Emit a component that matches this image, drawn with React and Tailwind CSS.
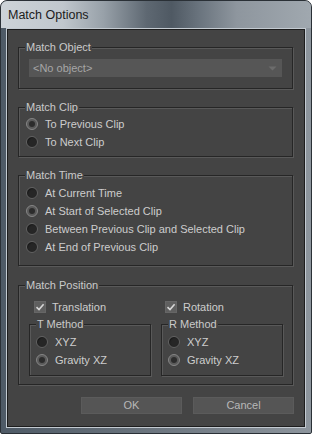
import React from 'react'

const font = { fontFamily: '"Liberation Sans", Arial, sans-serif' }

function Group({ title, className = '', children }) {
  return (
    <div
      className={`relative border border-[#262626] shadow-[1px_1px_0_#595959,inset_1px_1px_0_#595959] ${className}`}
    >
      <span className="absolute left-[6px] top-[-8px] bg-[#444444] px-[1px] text-[11px] leading-[14px] text-[#cacaca]">
        {title}
      </span>
      {children}
    </div>
  )
}

function Radio({ label, checked, className = '' }) {
  return (
    <div className={`flex items-center h-[18px] gap-[7px] ${className}`}>
      {checked ? (
        <div className="w-[12px] h-[12px] rounded-full border border-[#858585] bg-[#5a5a5a] flex items-center justify-center shrink-0">
          <div className="w-[6px] h-[6px] rounded-full bg-[#2c2c2c]" />
        </div>
      ) : (
        <div className="w-[12px] h-[12px] rounded-full border border-[#626262] bg-[#262626] shadow-[inset_1px_1px_1px_#1a1a1a] shrink-0" />
      )}
      <span className="text-[11px] leading-[14px] text-[#cdcdcd] whitespace-nowrap">{label}</span>
    </div>
  )
}

function Check({ label, className = '' }) {
  return (
    <div className={`flex items-center h-[16px] gap-[6px] ${className}`}>
      <div className="w-[12px] h-[12px] bg-[#5f5f5f] border border-[#666666] flex items-center justify-center shrink-0">
        <svg width="10" height="10" viewBox="0 0 10 10">
          <path d="M1.5 5.2 L4 7.6 L8.6 2.2" fill="none" stroke="#d6d6d6" strokeWidth="1.6" />
        </svg>
      </div>
      <span className="text-[11px] leading-[14px] text-[#cdcdcd] whitespace-nowrap">{label}</span>
    </div>
  )
}

function Button({ children }) {
  return (
    <div className="w-[101px] h-[17px] bg-[#555555] border border-[#5b5b5b] flex items-center justify-center text-[11px] text-[#b8b8b8]">
      {children}
    </div>
  )
}

export default function App() {
  return (
    <div
      style={font}
      className="w-[312px] h-[434px] flex flex-col rounded-t-[7px] rounded-b-[2px] border border-[#2a3036] bg-[linear-gradient(to_right,#4e5a66_0%,#66707a_40%,#8d959d_100%)] overflow-hidden"
    >
      {/* title bar */}
      <div className="h-[27px] shrink-0 flex items-center pl-[7px] pt-[2px] bg-[linear-gradient(to_right,#cdd3d8_0%,#c0c7cd_20%,#98a1a9_33%,#5e6872_47%,#4f5963_55%,#6a747e_64%,#8e969e_76%,#a0a8af_100%)]">
        <span className="text-[12.5px] text-[#1c1c1c]">Match Options</span>
      </div>

      {/* client area */}
      <div className="mx-[5px] border border-[#c3cad1] flex-1 flex flex-col mb-[5px]">
        <div className="border border-[#1d1d1d] bg-[#444444] flex-1 flex flex-col pt-[17px] pl-[10px] pr-[11px]">
          <Group title="Match Object" className="h-[42px] pt-[11px] px-[10px]">
            <div className="h-[18px] bg-[#565656] flex items-center justify-between pl-[4px] pr-[5px]">
              <span className="text-[11px] text-[#a6a6a6]">&lt;No object&gt;</span>
              <svg width="9" height="5" viewBox="0 0 9 5">
                <path d="M0.5 0.5 L8.5 0.5 L4.5 4.5 Z" fill="#6c6c6c" />
              </svg>
            </div>
          </Group>

          <Group title="Match Clip" className="mt-[18px] h-[50px] pt-[7px] pl-[7px]">
            <Radio label="To Previous Clip" checked />
            <Radio label="To Next Clip" />
          </Group>

          <Group title="Match Time" className="mt-[18px] h-[91px] pt-[8px] pl-[7px]">
            <Radio label="At Current Time" />
            <Radio label="At Start of Selected Clip" checked />
            <Radio label="Between Previous Clip and Selected Clip" />
            <Radio label="At End of Previous Clip" />
          </Group>

          <Group title="Match Position" className="mt-[19px] h-[100px] pt-[13px] pl-[10px]">
            <div className="grid grid-cols-[122px_122px] gap-x-[10px]">
              <Check label="Translation" className="ml-[5px]" />
              <Check label="Rotation" className="ml-[4px]" />
              <Group title="T Method" className="mt-[9px] h-[52px] pt-[8px] pl-[6px]">
                <Radio label="XYZ" />
                <Radio label="Gravity XZ" checked />
              </Group>
              <Group title="R Method" className="mt-[9px] h-[52px] pt-[8px] pl-[6px]">
                <Radio label="XYZ" />
                <Radio label="Gravity XZ" checked />
              </Group>
            </div>
          </Group>

          <div className="mt-[12px] flex justify-end gap-[11px] -mr-[1px]">
            <Button>OK</Button>
            <Button>Cancel</Button>
          </div>
        </div>
      </div>
    </div>
  )
}
